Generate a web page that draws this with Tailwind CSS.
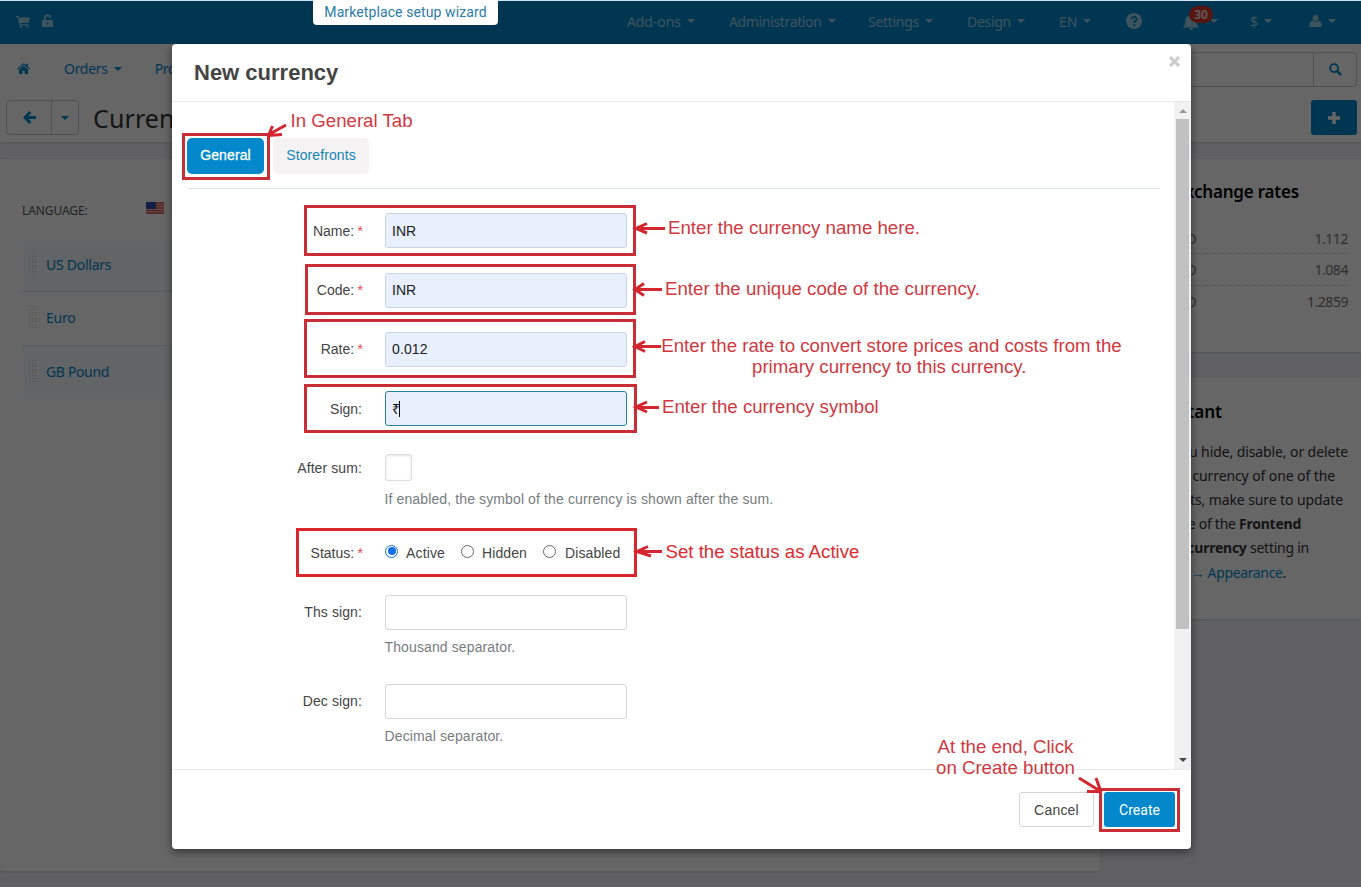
<!DOCTYPE html>
<html lang="en">

<head>
    <meta charset="UTF-8">
    <meta name="viewport" content="width=device-width, initial-scale=1.0">
    <title>New currency</title>
    <script src="https://cdn.jsdelivr.net/npm/@tailwindcss/browser@4"></script>
</head>

<body class="relative w-[1361px] h-[887px] overflow-hidden bg-[#eff1f5] font-['Noto_Sans',sans-serif] text-[14px]">
    <!-- Top bar -->
    <header class="flex items-center justify-between h-11 bg-[#0388cc] border-t border-[#cfe6f2] text-white/60 pl-4 pr-[25px]">
        <div class="flex items-center gap-3 text-white/60">
            <svg class="w-[14px] h-3 -mt-0.5" viewBox="0 0 14 12" fill="currentColor">
                <path d="M0 0h2.6l.4 1.4H14L12.6 7H4.5l.3 1.2h7.7v1.2H3.7L1.7 1.2H0z" />
                <circle cx="5" cy="11" r="1.1" />
                <circle cx="11.5" cy="11" r="1.1" />
            </svg>
            <svg class="w-[11px] h-[13px] -mt-1" viewBox="0 0 11 13" fill="currentColor">
                <path d="M2 6V4a3.5 3.5 0 0 1 7 0H7.2a1.7 1.7 0 0 0-3.4 0v2H11v7H0V6zM5 8v2.5h1.2V8z" fill-rule="evenodd" />
            </svg>
        </div>
        <nav class="flex items-center pb-[3px]">
            <div class="flex items-center w-[102px] gap-1.5"><span class="tracking-[-0.1px]">Add-ons</span><i class="border-x-4 border-t-4 border-x-transparent border-t-current"></i></div>
            <div class="flex items-center w-[139px] gap-1.5"><span class="tracking-[-0.35px]">Administration</span><i class="border-x-4 border-t-4 border-x-transparent border-t-current"></i></div>
            <div class="flex items-center w-[99px] gap-1.5"><span class="tracking-[-0.3px]">Settings</span><i class="border-x-4 border-t-4 border-x-transparent border-t-current"></i></div>
            <div class="flex items-center w-[92px] gap-1.5"><span class="tracking-[-0.3px]">Design</span><i class="border-x-4 border-t-4 border-x-transparent border-t-current"></i></div>
            <div class="flex items-center w-[67px] gap-1.5"><span>EN</span><i class="border-x-4 border-t-4 border-x-transparent border-t-current"></i></div>
            <div class="w-[57px]">
                <svg class="w-4 h-4" viewBox="0 0 16 16">
                    <circle cx="8" cy="8" r="8" fill="#fff" fill-opacity=".6" />
                    <path d="M5.5 6.2a2.5 2.3 0 1 1 3.8 1.9c-.9.6-1.200.9-1.200 1.800M8.100 11.200v2" fill="none" stroke="#0388cc" stroke-width="2" />
                </svg>
            </div>
            <div class="relative flex items-center w-[67px]">
                <svg class="w-4 h-[15px] mt-0.5" viewBox="0 0 16 15" fill="currentColor">
                    <path d="M0 12c2-2 2.500-4 2.500-7C2.500 2 4.500 1 8 1s5 2 5 4.500c0 3 .8 5 3 6.500v.5H0zM6 13h4a2 2 0 0 1-4 0z" />
                </svg>
                <span class="absolute left-[6px] -top-[7px] w-6 h-[17px] rounded-full bg-[#d9362c] text-white/80 text-[12px] leading-[17px] font-bold text-center">30</span>
                <i class="ml-[11px] border-x-4 border-t-4 border-x-transparent border-t-current"></i>
            </div>
            <div class="flex items-center w-[59px] gap-1.5"><span>$</span><i class="border-x-4 border-t-4 border-x-transparent border-t-current"></i></div>
            <div class="flex items-center gap-1.5">
                <svg class="w-[13px] h-3" viewBox="0 0 12 12" fill="currentColor">
                    <ellipse cx="6" cy="3" rx="2.900" ry="3" />
                    <path d="M0 12V9.500C0 7 1.500 6 3.300 5.600a4 4 0 0 0 5.400 0C10.500 6 12 7 12 9.500V12z" />
                </svg>
                <i class="border-x-4 border-t-4 border-x-transparent border-t-current"></i>
            </div>
        </nav>
    </header>

    <!-- Navigation and title -->
    <div class="h-[98px] bg-white shadow-sm">
        <div class="flex items-center justify-between h-[51px] pl-[17px] pr-1 text-[#0388cc]">
            <div class="flex items-center -mt-0.5">
                <svg class="w-[13px] h-[11px]" viewBox="0 0 13 11" fill="currentColor">
                    <path d="M6.500 0 9 2.200V.7h1.800v3L13 5.700l-.8.9-5.700-5-5.700 5-.8-.9z" />
                    <path d="m6.500 2.600 4.500 4V11H7.700V7.700H5.300V11H2V6.600z" />
                </svg>
                <span class="ml-[34px] tracking-[-0.3px]">Orders</span>
                <i class="ml-1.5 border-x-4 border-t-4 border-x-transparent border-t-current"></i>
                <span class="ml-[33px] tracking-[-0.3px]">Pro</span>
            </div>
            <div class="flex items-center w-[240px] h-[35px] -mt-px border border-[#c5c9cf] rounded-sm">
                <span class="flex-1"></span>
                <span class="flex items-center justify-center w-[43px] h-full border-l border-[#c5c9cf]">
                    <svg class="w-[13px] h-[13px]" viewBox="0 0 14 14" fill="none" stroke="currentColor" stroke-width="2">
                        <circle cx="5.500" cy="5.500" r="4.300" />
                        <path d="m8.700 8.700 4.300 4.300" stroke-width="2.600" />
                    </svg>
                </span>
            </div>
        </div>
        <div class="flex items-center justify-between h-[45px] pl-1.5 pr-1">
            <div class="flex items-center">
                <div class="flex h-[35px] w-[73px] border border-[#c5c9cf] rounded-sm text-[#0388cc]">
                    <span class="flex items-center justify-center w-[45px] border-r border-[#c5c9cf]">
                        <svg class="w-[13px] h-[13px]" viewBox="0 0 12 12" fill="none" stroke="currentColor" stroke-width="2.600">
                            <path d="M6.800 1 1.800 6l5 5M2 6h10" />
                        </svg>
                    </span>
                    <span class="flex flex-1 items-center justify-center">
                        <i class="border-x-4 border-t-4 border-x-transparent border-t-current"></i>
                    </span>
                </div>
                <h1 class="ml-[14px] mt-0.5 text-[25px] text-[#333] tracking-[0.1px]">Currencies</h1>
            </div>
            <button class="flex items-center justify-center w-[46px] h-[35px] bg-[#0388cc] rounded-[3px]">
                <svg class="w-3 h-3" viewBox="0 0 12 12" stroke="#fff" stroke-width="3.400">
                    <path d="M6 0v12M0 6h12" />
                </svg>
            </button>
        </div>
    </div>

    <!-- Page content -->
    <div class="flex gap-[14px] mt-[17px]">
        <main class="w-[1100px] h-[712px] bg-white rounded-[3px] shadow-sm pl-[22px] text-[#0388cc]">
            <div class="flex items-center h-[82px] pt-[21px] text-[12px] text-[#555]">
                <span class="w-[124px] tracking-[-0.1px]">LANGUAGE:</span>
                <svg class="w-[18px] h-3 -mt-[6px]" viewBox="0 0 18 12">
                    <rect width="18" height="12" fill="#eee" />
                    <path d="M0 1h18M0 3.500h18M0 6h18M0 8.500h18M0 11h18" stroke="#d6443a" stroke-width="1.500" />
                    <rect width="10" height="7" fill="#3150b0" />
                </svg>
            </div>
            <div class="flex items-center h-[51px] pb-[3px] bg-[#f7f9fc] border-b border-[#dfe4ea] tracking-[-0.25px]">
                <svg class="w-2 h-6 mx-[7px] mr-[9px]" viewBox="0 0 8 24" stroke="#ccc" stroke-dasharray="1 2"><path d="M.5 0v24M3.500 0v24M6.500 0v24" /></svg>
                US Dollars
            </div>
            <div class="flex items-center h-[54px] pb-0.5 border-b border-[#dfe4ea] tracking-[-0.25px]">
                <svg class="w-2 h-6 mx-[7px] mr-[9px]" viewBox="0 0 8 24" stroke="#ccc" stroke-dasharray="1 2"><path d="M.5 0v24M3.500 0v24M6.500 0v24" /></svg>
                Euro
            </div>
            <div class="flex items-center h-[53px] pb-0.5 bg-[#f7f9fc] tracking-[-0.35px]">
                <svg class="w-2 h-6 mx-[7px] mr-[9px]" viewBox="0 0 8 24" stroke="#ccc" stroke-dasharray="1 2"><path d="M.5 0v24M3.500 0v24M6.500 0v24" /></svg>
                GB Pound
            </div>
        </main>
        <aside class="flex-1">
            <section class="h-[193px] bg-white shadow-sm pt-[20px] pr-[13px] pl-3">
                <h2 class="pr-[49px] text-right text-[17px] leading-[26px] font-semibold text-black whitespace-nowrap tracking-[-0.2px]">Exchange rates</h2>
                <div class="mt-[18px] text-[#777]">
                    <div class="flex justify-between h-[31px] items-center border-b border-dotted border-[#bbb] tracking-[-0.45px]"><span class="pl-[7px]">EUR / USD</span><span>1.112</span></div>
                    <div class="flex justify-between h-8 items-center border-b border-dotted border-[#bbb] tracking-[-0.45px]"><span class="pl-[7px]">EUR / USD</span><span>1.084</span></div>
                    <div class="flex justify-between h-[31px] items-center tracking-[-0.45px]"><span class="pl-[6px]">GBP / USD</span><span>1.2859</span></div>
                </div>
            </section>
            <section class="h-[241px] mt-[26px] bg-white shadow-sm pt-[21px] pr-[13px] text-right text-[#333] whitespace-nowrap">
                <h2 class="pr-[126px] text-[17px] leading-[26px] font-semibold text-black">Important</h2>
                <div class="mt-[15px] leading-6">
                    <p class="tracking-[-0.1px]">If you hide, disable, or delete</p>
                    <p class="pr-[13px] tracking-[-0.1px]">default currency of one of the</p>
                    <p class="pr-[5px] tracking-[-0.1px]">storefronts, make sure to update</p>
                    <p class="pr-[47px] tracking-[-0.25px]">the value of the <b>Frontend</b></p>
                    <p class="pr-[39px] tracking-[-0.25px]"><b>default currency</b> setting in</p>
                    <p class="pr-[62px] pt-px tracking-[-0.35px]"><span class="text-[#0388cc]">Settings → Appearance</span>.</p>
                </div>
            </section>
        </aside>
    </div>

    <div class="absolute inset-x-0 top-px bottom-0 bg-black/60"></div>

    <div class="absolute left-[313px] top-0 w-[185px] h-[25px] bg-white rounded-b-[4px] text-center text-[#2a7ba8] font-['Roboto',sans-serif] leading-[25px] tracking-[0.1px]">Marketplace setup wizard</div>

    <!-- Modal -->
    <div class="absolute left-[172px] top-11 w-[1019px] h-[805px] flex flex-col bg-white rounded-[4px] shadow-[0_3px_9px_rgba(0,0,0,0.5)] font-['Liberation_Sans',sans-serif] text-[#444]">
        <div class="flex justify-between h-[58px] border-b border-[#eaeaea] pl-[22px] pr-[11px]">
            <h2 class="text-[22px] leading-[57px] font-bold">New currency</h2>
            <svg class="w-[11px] h-[11px] mt-3" viewBox="0 0 11 11" stroke="#ccc" stroke-width="3.200">
                <path d="m1 1 9 9M10 1 1 10" />
            </svg>
        </div>
        <div class="flex h-[667px]">
            <div class="flex-1 pt-9">
                <div class="flex gap-[9px] h-[51px] ml-[15px] mr-[14px] border-b border-[#dde3e6]">
                    <span class="w-[77px] h-9 rounded-[5px] bg-[#0388cc] text-white text-center leading-[35px] tracking-[0.1px] [-webkit-text-stroke:0.3px_white]">General</span>
                    <span class="w-24 h-9 rounded-[5px] bg-[#f4f2f3] text-[#1585b8] text-center leading-[35px] tracking-[0.1px]">Storefronts</span>
                </div>
                <div class="pt-6">
                    <div class="flex items-center h-[35px]">
                        <label class="w-[190px] pt-px text-right">Name:<span class="ml-[3px] -mr-px text-[15px] text-[#e0505a]">*</span></label>
                        <div class="ml-[23px] w-[242px] h-[35px] pl-1.5 leading-[34px] rounded-[3px] border border-[#c8d5e4] bg-[#e8effd] text-[#222]">INR</div>
                    </div>
                    <div class="flex items-center h-[35px] mt-[25px]">
                        <label class="w-[190px] text-right">Code:<span class="ml-[3px] -mr-px text-[15px] text-[#e0505a]">*</span></label>
                        <div class="ml-[23px] w-[242px] h-[35px] pl-1.5 leading-[33px] rounded-[3px] border border-[#c8d5e4] bg-[#e8effd] text-[#222]">INR</div>
                    </div>
                    <div class="flex items-center h-[35px] mt-6">
                        <label class="w-[190px] text-right">Rate:<span class="ml-[3px] -mr-px text-[15px] text-[#e0505a]">*</span></label>
                        <div class="ml-[23px] w-[242px] h-[35px] pl-1.5 leading-[33px] rounded-[3px] border border-[#c8d5e4] bg-[#e8effd] text-[#222] tracking-[0.1px]">0.012</div>
                    </div>
                    <div class="flex items-center h-[35px] mt-6">
                        <label class="w-[190px] pt-0.5 text-right">Sign:</label>
                        <div class="flex items-center ml-[23px] w-[242px] h-[35px] pl-1.5 rounded-[3px] border border-[#27829f] bg-[#e8effd] text-[#111]"><span class="w-[7px] pt-px text-[14px]">₹</span><span class="w-px h-4 bg-black"></span></div>
                    </div>
                    <div class="flex items-center h-[27px] mt-7">
                        <label class="w-[190px] pt-0.5 text-right tracking-[0.1px]">After sum:</label>
                        <div class="ml-[23px] w-[27px] h-[27px] rounded-[3px] border border-[#ddd] shadow-[inset_0_1px_3px_rgba(0,0,0,0.1)]"></div>
                    </div>
                    <p class="ml-[212.5px] mt-2 h-5 leading-5 text-[#777c80] tracking-[0.12px]">If enabled, the symbol of the currency is shown after the sum.</p>
                    <div class="flex items-center h-5 mt-[34px]">
                        <label class="w-[190px] text-right">Status:<span class="ml-[3px] -mr-px text-[15px] text-[#e0505a]">*</span></label>
                        <span class="ml-[23px] -mt-1 flex items-center justify-center w-[13px] h-[13px] rounded-full border border-[#1570e8]"><i class="w-2 h-2 rounded-full bg-[#1570e8]"></i></span>
                        <span class="ml-2 w-[39px] tracking-[0.15px]">Active</span>
                        <span class="ml-4 -mt-1 w-[13px] h-[13px] rounded-full border border-[#666]"></span>
                        <span class="ml-2 w-[46px] tracking-[0.1px]">Hidden</span>
                        <span class="ml-[15px] -mt-1 w-[13px] h-[13px] rounded-full border border-[#666]"></span>
                        <span class="ml-[9px] tracking-[0.1px]">Disabled</span>
                    </div>
                    <div class="flex items-center h-[35px] mt-8">
                        <label class="w-[190px] text-right tracking-[0.1px]">Ths sign:</label>
                        <div class="ml-[23px] w-[242px] h-[35px] rounded-[3px] border border-[#d5d5d5]"></div>
                    </div>
                    <p class="ml-[212.5px] mt-[7px] h-5 leading-5 text-[#777c80] tracking-[0.12px]">Thousand separator.</p>
                    <div class="flex items-center h-[35px] mt-[27px]">
                        <label class="w-[190px] text-right tracking-[0.1px]">Dec sign:</label>
                        <div class="ml-[23px] w-[242px] h-[35px] rounded-[3px] border border-[#d5d5d5]"></div>
                    </div>
                    <p class="ml-[212.5px] mt-[7px] h-5 leading-5 text-[#777c80] tracking-[0.12px]">Decimal separator.</p>
                </div>
            </div>
            <!-- Scrollbar -->
            <div class="flex flex-col items-center w-[17px] bg-[#f1f1f1]">
                <i class="mt-[7px] border-x-4 border-b-4 border-x-transparent border-b-[#999]"></i>
                <span class="mt-[6px] w-[13px] h-[510px] bg-[#c1c1c1]"></span>
                <i class="mt-auto mb-[7px] border-x-4 border-t-4 border-x-transparent border-t-[#444]"></i>
            </div>
        </div>
        <div class="flex-1 flex justify-end gap-[10px] pt-[22px] pr-4 border-t border-[#eaeaea]">
            <span class="w-[75px] h-[35px] border border-[#d5d5d5] rounded-[3px] text-center leading-[34px] tracking-[0.2px]">Cancel</span>
            <span class="w-[71px] h-[35px] bg-[#0388cc] rounded-[3px] text-white text-center leading-9 font-['Roboto',sans-serif]">Create</span>
        </div>
    </div>

    <!-- Callouts -->
    <svg class="absolute inset-0 w-[1361px] h-[887px]" viewBox="0 0 1361 887" fill="none" stroke="#c92d35" stroke-width="3">
        <rect x="183.500" y="134.500" width="85" height="44" />
        <rect x="305.500" y="206.500" width="329" height="48" />
        <rect x="306.500" y="265.500" width="328" height="48" />
        <rect x="305.500" y="320.500" width="329" height="56" />
        <rect x="305.500" y="385.500" width="330" height="46" />
        <rect x="297.500" y="529.500" width="338" height="46" stroke="#d8262d" />
        <rect x="1100.500" y="789.500" width="78" height="41" />
        <g stroke="#d4262e">
            <path d="M286 125 268 135M272.500 126l-4 9.500M282 134.500l-14 1" />
            <path d="M665 228.500h-29M647 223.500l-11 5 11 4.500" />
            <path d="M662 289.500h-28M644 283.500l-9 6 9 6" />
            <path d="M661 346.500h-26M645 341.500l-10 5 10 5" />
            <path d="M659 407.500h-23M647 402l-11 5 11 5" />
            <path d="M662 551.500h-25M648 546.500l-11 5 14 4.500" />
            <path d="m1079 778 21 13M1096 778l5 14M1087 791.500h14" />
        </g>
    </svg>
    <div class="font-['Liberation_Sans',sans-serif] text-[18.670px] leading-[21px] text-[#d0393f] whitespace-nowrap">
        <span class="absolute left-[290.5px] top-[110px]">In General Tab</span>
        <span class="absolute left-[668px] top-[217px]">Enter the currency name here.</span>
        <span class="absolute left-[665px] top-[278px]">Enter the unique code of the currency.</span>
        <span class="absolute left-[661px] top-[335px] w-[461px] text-center">Enter the rate to convert store prices and costs from the</span>
        <span class="absolute left-[752px] top-[356px]">primary currency to this currency.</span>
        <span class="absolute left-[662px] top-[396px]">Enter the currency symbol</span>
        <span class="absolute left-[665.5px] top-[541px] text-[#e02b31]">Set the status as Active</span>
        <span class="absolute left-[936px] top-[736px] w-[139px] text-center">At the end, Click<br>on Create button</span>
    </div>
</body>

</html>
